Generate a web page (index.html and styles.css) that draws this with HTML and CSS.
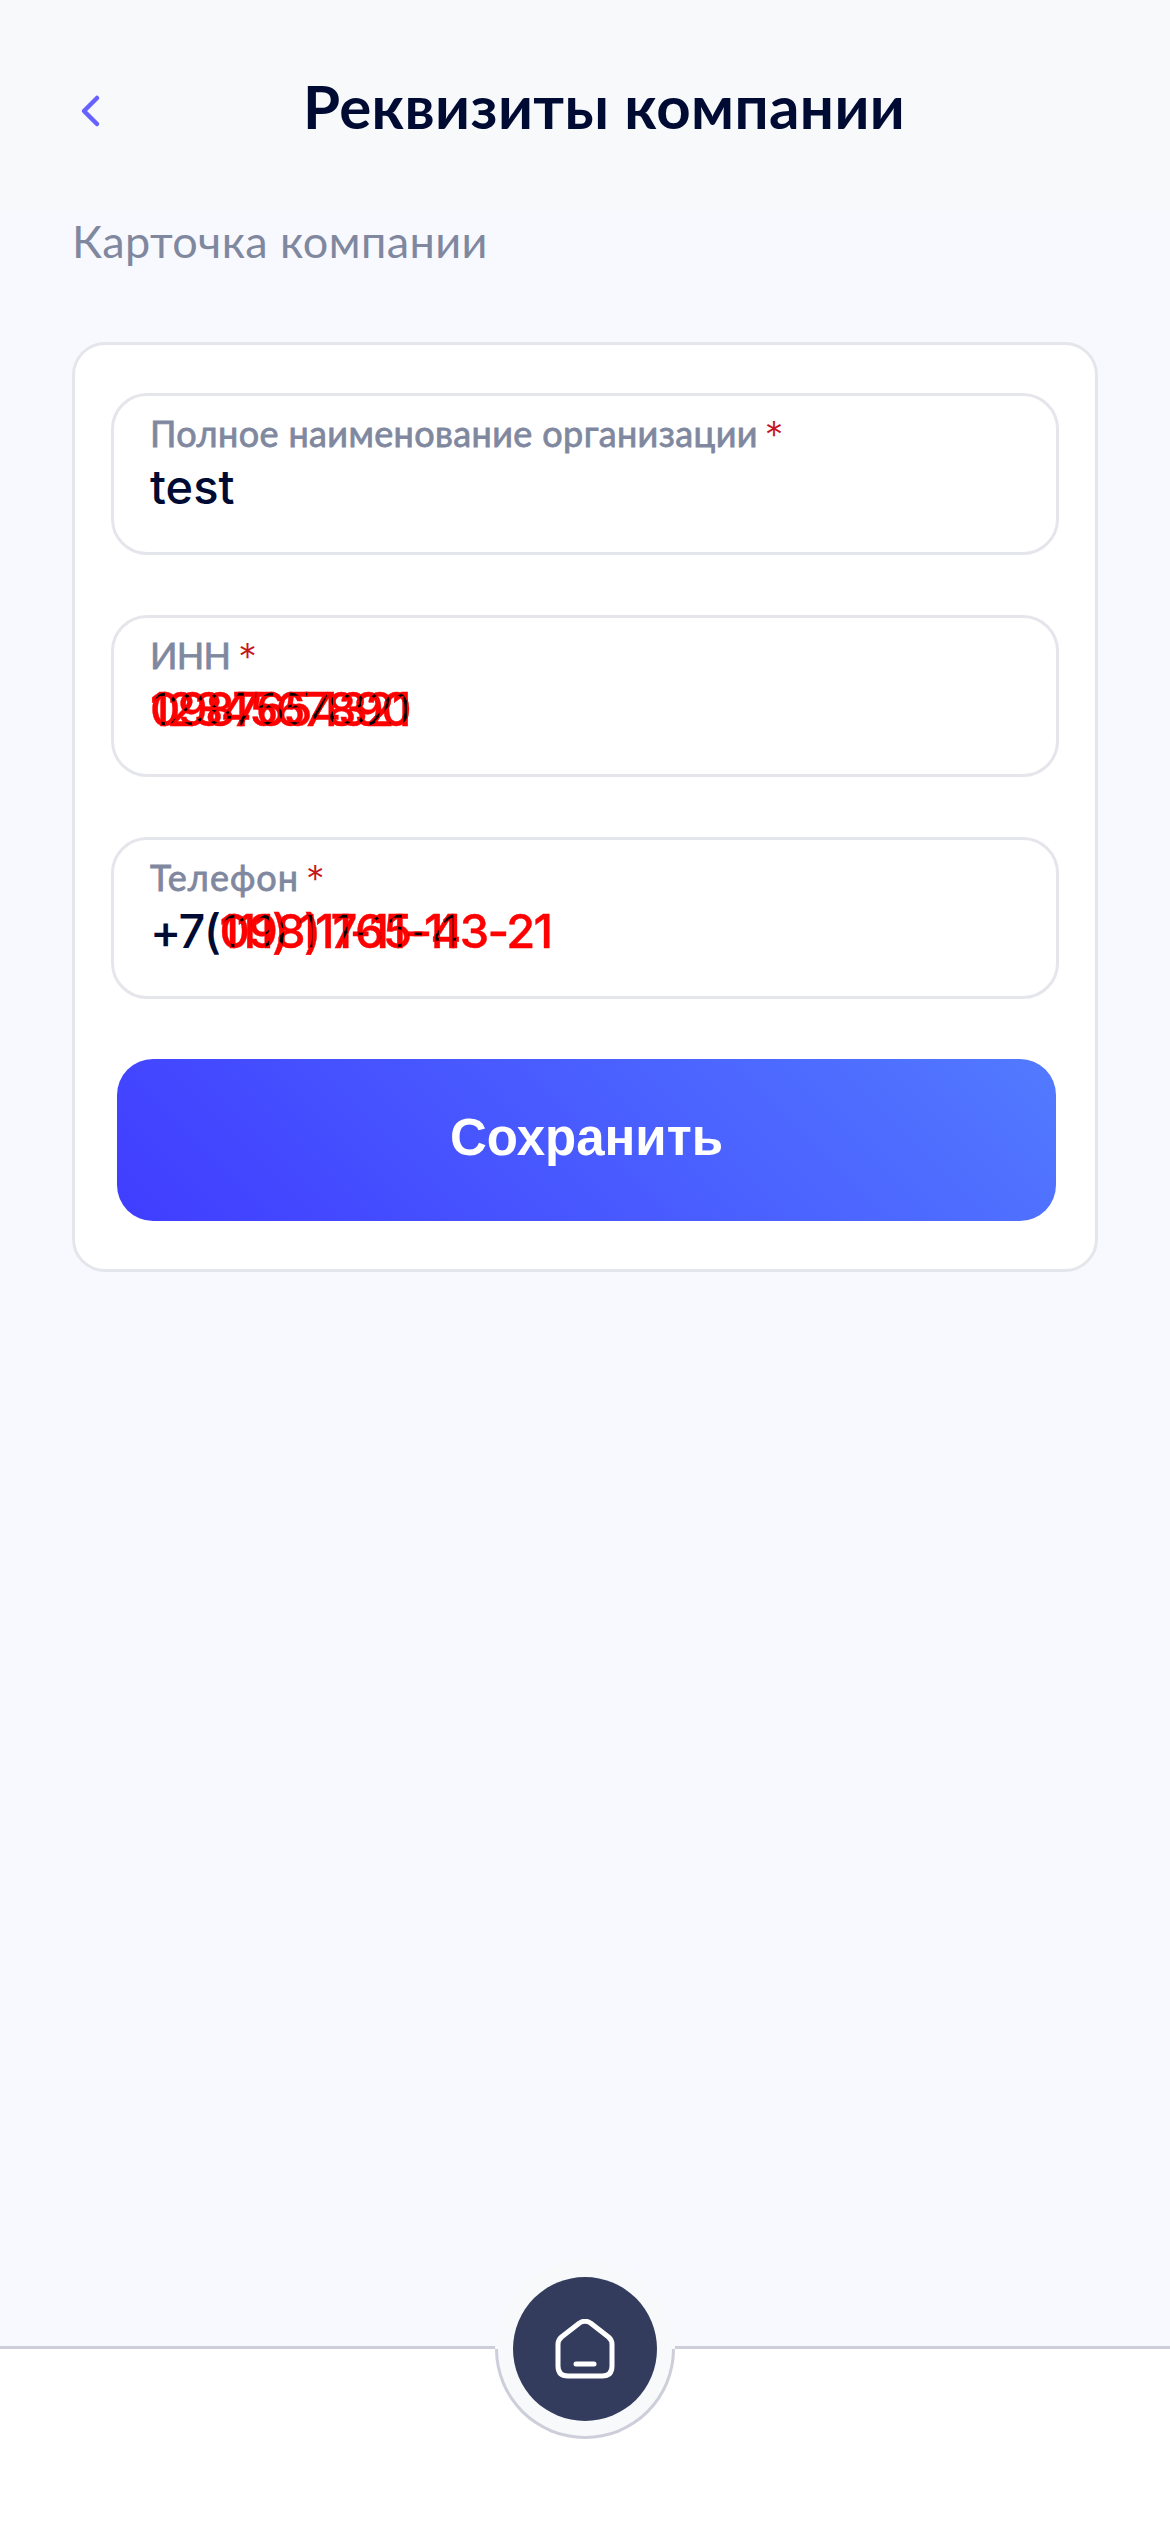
FILE: index.html
```html
<!DOCTYPE html>
<html lang="ru">
<head>
<meta charset="utf-8">
<title>Реквизиты компании</title>
<link rel="stylesheet" href="styles.css">
</head>
<body>
<header class="header">
  <svg class="back" viewBox="0 0 24 36"><path d="M19 5 L6 18 L19 31"/></svg>
  <h1 class="title">Реквизиты компании</h1>
</header>
<main class="main">
  <h2 class="subtitle">Карточка компании</h2>
  <form class="card">
    <div class="field">
      <div class="label"><span>Полное наименование организации</span><span class="star">*</span></div>
      <div class="value">test</div>
    </div>
    <div class="field">
      <div class="label label-inn"><span>ИНН</span><span class="star">*</span></div>
      <div class="value digits"><span class="stack"><span class="over">1234567890</span><span class="over">0987654321</span><span class="cross" data-a="1234567890" data-b="0987654321"></span></span></div>
    </div>
    <div class="field">
      <div class="label label-phone"><span>Телефон</span><span class="star">*</span></div>
      <div class="value phone"><span>+7(</span><span class="stack"><span class="over ones">111) 111-11-11</span><span class="over">098) 765-43-21</span><span class="cross ones-first" data-a="111) 111-11-11" data-b="098) 765-43-21"></span></span></div>
    </div>
    <button class="save" type="button">Сохранить</button>
  </form>
</main>
<nav class="nav">
  <div class="ring"><div class="home">
    <svg viewBox="0 0 60 60" class="home-icon"><path d="M24.5 4 Q30 0.5 35.500 4 L53.500 18 Q57 21 57 25.500 V47 Q57 57 47 57 H13 Q3 57 3 47 V25.500 Q3 21 6.500 18 Z"/><path d="M21 45 H39"/></svg>
  </div></div>
</nav>
</body>
</html>
```
FILE: styles.css
```css
* { box-sizing: border-box; }
body { margin: 0; width: 1170px; height: 2532px; display: flex; flex-direction: column; background: #f8f9fe; color: #000b33; font-family: Lato, "Noto Sans", sans-serif; overflow: hidden; }
.header { height: 210px; flex: none; display: flex; align-items: center; padding: 12px 0 0 78px; background: #f7f9fb; }
.back { width: 24px; height: 36px; flex: none; fill: none; stroke: #6562ff; stroke-width: 4.5; stroke-linecap: round; stroke-linejoin: round; }
.title { margin: 0 0 10px 201px; font-size: 60px; line-height: 72px; font-weight: 700; letter-spacing: 0.4px; white-space: nowrap; }
.main { flex: 1; padding: 0 72px; }
.subtitle { margin: 0; height: 132px; font-size: 45px; line-height: 62px; font-weight: 400; letter-spacing: 0.4px; color: #80889f; white-space: nowrap; }
.card { height: 930px; padding: 48px 36px; display: flex; flex-direction: column; gap: 60px; background: #fff; border: 3px solid #e5e6eb; border-radius: 33px; }
.field { height: 162px; padding: 15px 36px; border: 3px solid #e5e6eb; border-radius: 36px; }
.label { height: 46px; display: flex; gap: 7px; font-size: 36px; line-height: 45px; letter-spacing: 0.38px; color: #80889f; white-space: nowrap; -webkit-text-stroke: 0.8px currentColor; }
.label-inn { letter-spacing: -0.7px; gap: 8px; }
.label-phone { letter-spacing: 1px; }
.star { color: #c5161d; font-family: Inter, sans-serif; font-size: 37px; font-weight: 300; line-height: 48px; -webkit-text-stroke: 0; }
.value { height: 58px; font-family: Inter, "Liberation Sans", sans-serif; font-size: 47px; line-height: 60px; font-weight: 500; white-space: pre; }
.digits { letter-spacing: -2.4px; }
.phone { display: flex; letter-spacing: -1.65px; }
.stack { display: inline-grid; isolation: isolate; }
.stack > span { grid-area: 1 / 1; }
.over { color: #f00; -webkit-text-stroke: 0.4px #f00; }
.ones, .ones-first::before { letter-spacing: -2.1px; }
/* Darkens the points where both overlaid numbers meet. */
.cross { display: grid; isolation: isolate; mix-blend-mode: multiply; background: #fff; }
.cross::before, .cross::after { grid-area: 1 / 1; background: #fff; color: #000b33; -webkit-text-stroke: 1.6px #fff; }
.cross::before { content: attr(data-a); }
.cross::after { content: attr(data-b); mix-blend-mode: lighten; }
.save { height: 162px; flex: none; margin: 0 3px 0 6px; padding: 0 0 4px; border: 0; border-radius: 36px; background: linear-gradient(45deg, #403dff, #527aff); color: #fff; font: 700 51px/60px "Liberation Sans", sans-serif; }
.nav { height: 186px; flex: none; display: flex; justify-content: center; background: #fff; border-top: 3px solid #cdceda; }
.ring { width: 180px; height: 180px; flex: none; margin-top: -90px; border-radius: 50%; display: grid; place-items: center; background: linear-gradient(#f7f9fb, #f7f9fb) padding-box, linear-gradient(#f7f9fb 50%, #cdceda 50%) border-box; border: 3px solid transparent; }
.home { width: 144px; height: 144px; border-radius: 50%; display: grid; place-items: center; background: #343c5d; }
.home-icon { width: 60px; height: 60px; fill: none; stroke: #fff; stroke-width: 5; stroke-linecap: round; stroke-linejoin: round; }
```
